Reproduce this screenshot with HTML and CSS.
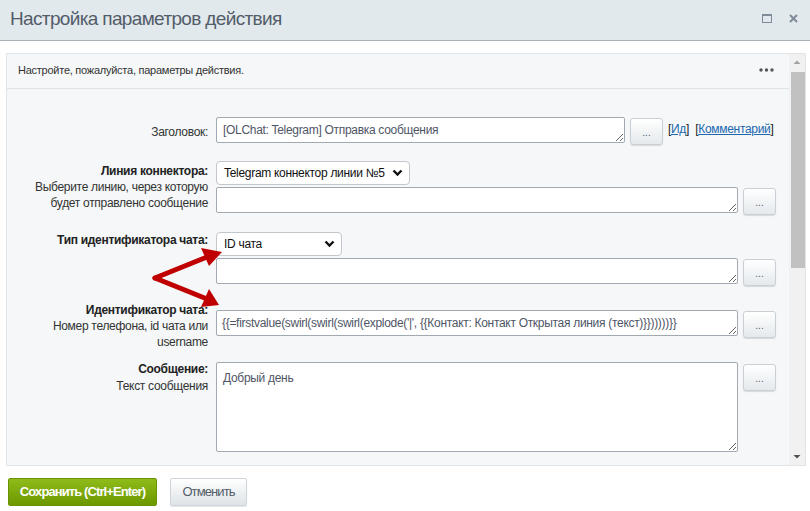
FILE: index.html
```html
<!DOCTYPE html>
<html lang="ru">
<head>
<meta charset="utf-8">
<title>Настройка параметров действия</title>
<link rel="stylesheet" href="styles.css">
</head>
<body>
<div class="dialog-head">
  <div class="dialog-title">Настройка параметров действия</div>
  <div class="dialog-icons">
    <svg class="ic" width="10" height="9" viewBox="0 0 10 9"><rect x="0.5" y="0.5" width="9" height="8" fill="none" stroke="#7f8b98" stroke-width="1"/><rect x="0.5" y="0.5" width="9" height="1.5" fill="#7f8b98"/></svg>
    <svg class="ic" width="9" height="9" viewBox="0 0 9 9"><path d="M1 1L8 8M8 1L1 8" stroke="#7f8b98" stroke-width="2"/></svg>
  </div>
</div>

<div class="main">
  <div class="panel">
    <div class="panel-inner">
      <div class="panel-top">
        <span>Настройте, пожалуйста, параметры действия.</span>
        <svg width="15" height="4" viewBox="0 0 15 4"><circle cx="2" cy="2" r="1.7" fill="#555"/><circle cx="7.5" cy="2" r="1.7" fill="#555"/><circle cx="13" cy="2" r="1.7" fill="#555"/></svg>
      </div>
      <div class="form">
        <div class="row r1">
          <div class="lbl">Заголовок:</div>
          <div class="fld">
            <div class="line">
              <textarea class="ta short" readonly>[OLChat: Telegram] Отправка сообщения</textarea>
              <button class="dots">...</button>
              <span class="links">[<a href="#">Ид</a>] &nbsp;[<a href="#">Комментарий</a>]</span>
            </div>
          </div>
        </div>

        <div class="row r2">
          <div class="lbl"><b>Линия коннектора:</b><br>Выберите линию, через которую<br>будет отправлено сообщение</div>
          <div class="fld">
            <div class="sel w1"><span>Telegram коннектор линии №5</span><svg width="11" height="8" viewBox="0 0 11 8"><path d="M1.5 1.5L5.5 5.5L9.5 1.5" fill="none" stroke="#111" stroke-width="2.4"/></svg></div>
            <div class="line">
              <textarea class="ta" readonly></textarea>
              <button class="dots">...</button>
            </div>
          </div>
        </div>

        <div class="row r3">
          <div class="lbl"><b>Тип идентификатора чата:</b></div>
          <div class="fld">
            <div class="sel w2"><span>ID чата</span><svg width="11" height="8" viewBox="0 0 11 8"><path d="M1.5 1.5L5.5 5.5L9.5 1.5" fill="none" stroke="#111" stroke-width="2.4"/></svg></div>
            <div class="line">
              <textarea class="ta" readonly></textarea>
              <button class="dots">...</button>
            </div>
          </div>
        </div>

        <div class="row r4">
          <div class="lbl"><b>Идентификатор чата:</b><br>Номер телефона, id чата или<br>username</div>
          <div class="fld">
            <div class="line">
              <textarea class="ta" readonly>{{=firstvalue(swirl(swirl(swirl(explode('|', {{Контакт: Контакт Открытая линия (текст)}})))))}}</textarea>
              <button class="dots">...</button>
            </div>
          </div>
        </div>

        <div class="row r5">
          <div class="lbl"><b>Сообщение:</b><br>Текст сообщения</div>
          <div class="fld">
            <div class="line">
              <textarea class="ta big" readonly>Добрый день</textarea>
              <button class="dots">...</button>
            </div>
          </div>
        </div>
      </div>
    </div>
    <div class="scrollbar">
      <svg width="16" height="16" viewBox="0 0 16 16"><path d="M4.5 10L8 6.5L11.5 10Z" fill="#a3a3a3"/></svg>
      <div class="track"><div class="thumb"></div></div>
      <svg width="16" height="16" viewBox="0 0 16 16"><path d="M4.5 6L8 9.5L11.5 6Z" fill="#505050"/></svg>
    </div>
    <svg class="arrows" width="80" height="70" viewBox="0 0 80 70">
      <path d="M6 35L58 14" stroke="#c00000" stroke-width="5" fill="none" stroke-linecap="round"/>
      <path d="M73 9L52 5L60 23Z" fill="#c00000"/>
      <path d="M6 35L58 56" stroke="#c00000" stroke-width="5" fill="none" stroke-linecap="round"/>
      <path d="M70 62L60 46L52 64Z" fill="#c00000"/>
    </svg>
  </div>

  <div class="footer">
    <button class="btn save">Сохранить (Ctrl+Enter)</button>
    <button class="btn cancel">Отменить</button>
  </div>
</div>
</body>
</html>
```
FILE: styles.css
```css
* { box-sizing: border-box; }
html, body { margin: 0; padding: 0; background: #fff; }
body {
  font-family: "Liberation Sans", Arial, sans-serif;
  font-size: 12px;
  letter-spacing: -0.3px;
  color: #333;
  width: 810px;
  height: 511px;
  overflow: hidden;
}
.dialog-head {
  height: 41px;
  background: #e2e9ed;
  border-bottom: 1px solid #a9b1b7;
  display: flex;
  align-items: center;
  justify-content: space-between;
  padding: 0 12px 0 10px;
}
.dialog-title {
  font-family: "Liberation Sans", sans-serif;
  font-size: 19px;
  color: #535c69;
  letter-spacing: -0.65px;
  padding-bottom: 3px;
}
.dialog-icons { display: flex; gap: 17px; align-items: center; padding-bottom: 4px; }
.ic { display: block; }

.main { padding: 12px 0 0 6px; }
.panel {
  position: relative;
  width: 800px;
  height: 413px;
  border: 1px solid #dfe5e8;
  background: #f5f7f8;
  display: flex;
  overflow: hidden;
}
.panel-inner { flex: 1; }
.panel-top {
  height: 35px;
  border-bottom: 1px solid #dde4e8;
  display: flex;
  align-items: center;
  justify-content: space-between;
  padding: 0 15px 2px 11px;
  color: #333;
  font-size: 11px;
  letter-spacing: -0.25px;
}
.form { padding-top: 28px; }
.row { display: flex; align-items: flex-start; }
.lbl {
  width: 201px;
  flex-shrink: 0;
  text-align: right;
  line-height: 16px;
  margin-right: 8px;
  color: #333;
}
.lbl b { color: #222; }
.fld { display: flex; flex-direction: column; }
.line { display: flex; align-items: flex-start; }
.ta {
  display: block;
  width: 522px;
  height: 26px;
  margin: 0;
  padding: 4px 6px;
  border: 1px solid #a2a9b0;
  border-radius: 2px;
  background: #fff;
  font-family: inherit;
  font-size: 12px;
  letter-spacing: -0.3px;
  line-height: 16px;
  color: #4f5566;
  overflow: hidden;
  white-space: nowrap;
  resize: both;
}
.ta.short { width: 409px; }
.ta.big { height: 90px; padding-top: 7px; white-space: normal; }
.dots {
  width: 33px;
  height: 27px;
  margin: 1px 0 0 5px;
  padding: 2px 0 0;
  border: 1px solid #c9d0d5;
  border-radius: 3px;
  background: linear-gradient(#ffffff, #e4e9ec);
  box-shadow: 0 1px 1px rgba(0,0,0,0.12);
  font-family: inherit;
  font-size: 10px;
  letter-spacing: 0;
  color: #535c69;
}
.links { margin: 5px 0 0 5px; color: #222; white-space: nowrap; }
.links a { color: #2067b0; text-decoration: underline; }
.sel {
  height: 24px;
  border: 1px solid #c3c7cc;
  border-radius: 4px;
  background: #fff;
  display: flex;
  align-items: center;
  justify-content: space-between;
  padding: 0 6px 0 7px;
  color: #111;
  white-space: nowrap;
}
.sel.w1 { width: 194px; }
.sel.w2 { width: 126px; }
.sel svg { display: block; flex-shrink: 0; }
.r1 .lbl { padding-top: 7px; }
.r2 { margin-top: 16px; }
.r2 .lbl { padding-top: 2px; }
.r2 .sel { margin-bottom: 2px; }
.r3 { margin-top: 17px; }
.r3 .lbl { padding-top: 0; }
.r3 .sel { margin-bottom: 2px; }
.r4 { margin-top: 16px; }
.r4 .fld { padding-top: 8px; }
.r4 .ta { padding-left: 5px; }
.r5 { margin-top: 11px; }
.r5 .lbl { line-height: 17px; }
.r5 .fld { padding-top: 1px; }
.r5 .dots { margin-top: 2px; }

.scrollbar {
  width: 16px;
  flex-shrink: 0;
  background: #f1f1f1;
  display: flex;
  flex-direction: column;
}
.scrollbar svg { display: block; }
.track { flex: 1; padding: 2px 0 0 2px; }
.thumb { width: 14px; height: 196px; background: #c1c1c1; }

.arrows { position: absolute; left: 142px; top: 189px; }

.footer { display: flex; gap: 13px; padding: 12px 0 0 2px; }
.btn {
  height: 28px;
  border-radius: 2px;
  font-family: "Liberation Sans", sans-serif;
  font-size: 13px;
  letter-spacing: -0.9px;
  padding: 0 0 1px;
}
.save {
  width: 149px;
  border: 1px solid #6b9200;
  background: linear-gradient(#8fbb1a, #6c9800);
  color: #fff;
  font-weight: bold;
}
.cancel {
  width: 77px;
  border: 1px solid #cfd5da;
  background: linear-gradient(#ffffff, #dde3e6);
  color: #535c69;
  box-shadow: 0 1px 1px rgba(0,0,0,0.1);
}
```
